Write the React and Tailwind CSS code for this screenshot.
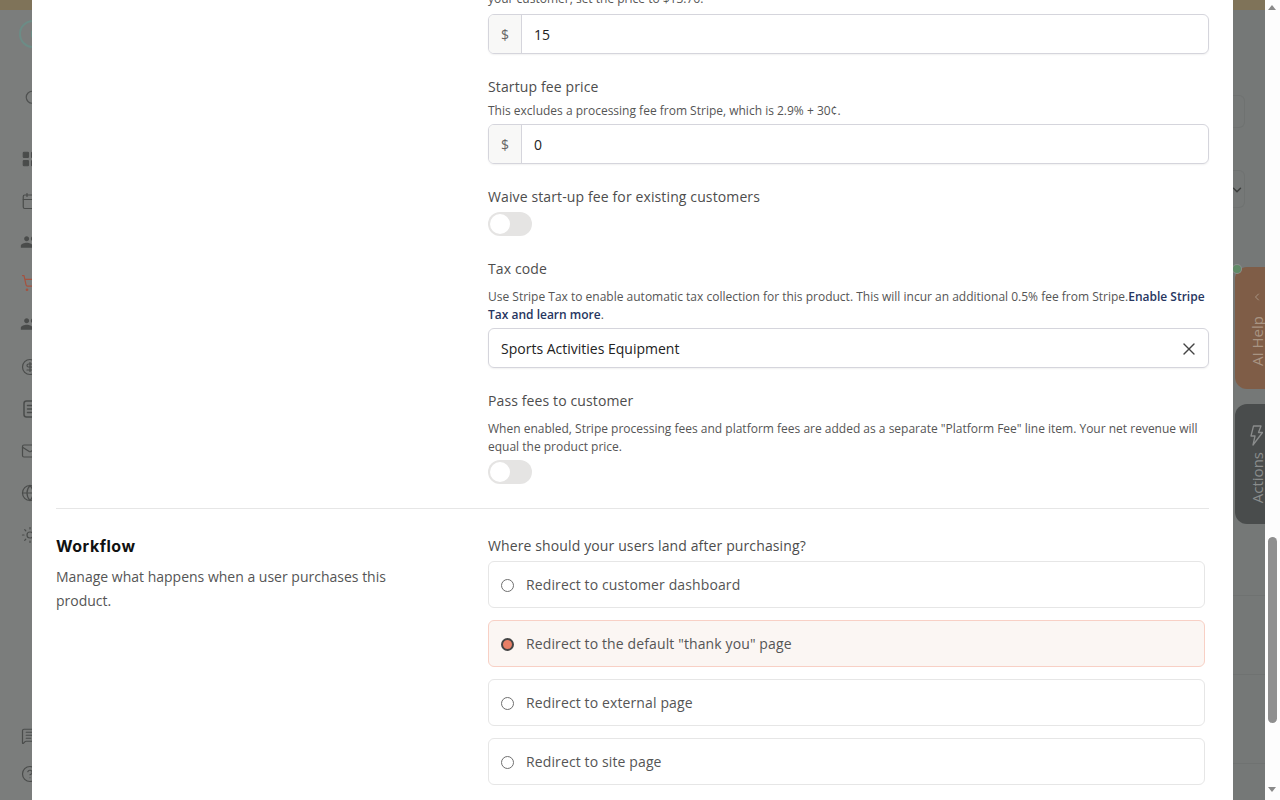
import { Calendar, ChevronDown, ChevronLeft, CircleDollarSign, CircleHelp, Globe, LayoutGrid, Mail, MessageSquareText, Search, ShoppingCart, Sun, X } from 'lucide-react';
import { MdPeople } from 'react-icons/md';

const radioOptions = [
  { id: 1, label: 'Redirect to customer dashboard' },
  { id: 2, label: 'Redirect to the default "thank you" page', checked: true },
  { id: 3, label: 'Redirect to external page' },
  { id: 4, label: 'Redirect to site page' },
];

const Toggle = ({ className }) => (
  <div className={`w-11 h-6 rounded-full bg-[#e5e4e3] p-0.5 ${className}`}>
    <div className="w-5 h-5 rounded-full bg-white" />
  </div>
);

const PriceInput = ({ value }) => (
  <div className="flex h-10 rounded-md border border-[#d5d5dc] shadow-[0_1px_2px_rgba(0,0,0,0.06)] overflow-hidden">
    <div className="w-[33px] shrink-0 bg-[#f8f8f7] border-r border-[#d5d5dc] flex items-center justify-center pt-px text-sm text-[#666]">$</div>
    <div className="flex-1 flex items-center pl-3 pt-px text-sm text-[#222]">{value}</div>
  </div>
);

const LeftStrip = () => (
  <div className="w-8 shrink-0 bg-[#7b7d7c] overflow-hidden">
    <div className="h-2.5 bg-[#7f7359]" />
    <div className="w-[28px] h-[28px] rounded-full border-2 border-[#6c8c86] ml-[19px] mt-[10px] flex items-center justify-center">
      <div className="w-1 h-2 rounded-full bg-[#6c8c86]" />
    </div>
    <Search size={18} strokeWidth={1.6} className="text-[#4f5150] ml-6 mt-[41px] shrink-0" />
    <div className="w-12 ml-[21px] mt-[43px] flex flex-col text-[#4a4c4b]">
      <LayoutGrid size={18} fill="currentColor" strokeWidth={1.5} />
      <Calendar size={18} strokeWidth={1.6} className="mt-6" />
      <MdPeople size={20} className="mt-[22px] -ml-[1px]" />
      <ShoppingCart size={18} strokeWidth={1.6} className="mt-[22px] text-[#a5523f]" />
      <MdPeople size={20} className="mt-[22px] -ml-[1px]" />
      <CircleDollarSign size={18} strokeWidth={1.6} className="mt-[24px]" />
      <svg width="18" height="18" viewBox="0 0 18 18" fill="none" stroke="currentColor" strokeWidth="1.5" strokeLinecap="round" className="mt-6 ml-[2px]">
        <rect x="1" y="1" width="16" height="16" rx="2.5" />
        <path d="M4.5 5.5h6M4.5 9h6M4.5 12.5h4" />
      </svg>
      <Mail size={18} strokeWidth={1.6} className="mt-6" />
      <Globe size={18} strokeWidth={1.6} className="mt-6" />
      <Sun size={18} strokeWidth={1.6} className="mt-6" />
      <MessageSquareText size={18} strokeWidth={1.6} className="mt-[183px]" />
      <CircleHelp size={18} strokeWidth={1.6} className="mt-5" />
    </div>
  </div>
);

const RightStrip = () => (
  <div className="w-8 shrink-0 bg-[#757877] overflow-hidden relative">
    <div className="h-2.5 bg-[#7f7359]" />
    <div className="h-[33px] w-3 mt-[85px] border-y border-r border-[#6f7271] rounded-r-md" />
    <div className="h-[38px] w-3 mt-[42px] border-y border-r border-[#6f7271] rounded-r-md flex items-center pt-0.5">
      <ChevronDown size={14} strokeWidth={2.5} className="text-[#3c3e3d] -ml-[3px] shrink-0" />
    </div>
    <div className="absolute left-[2px] top-[267px] w-[40px] h-[122px] rounded-l-xl bg-[#7f5d47] flex flex-col items-center pt-6 text-[#a89483]">
      <ChevronLeft size={12} strokeWidth={2} className="ml-[3px]" />
      <span className="[writing-mode:vertical-rl] rotate-180 text-[15px] leading-5 ml-[3px] mt-[13px]">AI Help</span>
    </div>
    <div className="absolute left-0 top-[265px] w-2 h-2 rounded-full bg-[#5f8a66] ring-1 ring-[#8c8f8e]" />
    <div className="absolute left-[2px] top-[404px] w-[40px] h-[120px] rounded-l-xl bg-[#494c4c] flex flex-col items-center pt-[21px] text-[#8a8c8c]">
      <svg width="13" height="21" viewBox="0 0 13 21" fill="none" stroke="currentColor" strokeWidth="1.3" strokeLinejoin="round" className="ml-[3px]">
        <path d="M3.5 1H11L8.5 7.5H12.5L3 20L5 11H1Z" />
      </svg>
      <span className="[writing-mode:vertical-rl] rotate-180 text-[15px] leading-5 ml-[3px] mt-[6px]">Actions</span>
    </div>
    <div className="border-t border-[#6f7271] mt-[387px]" />
    <div className="border-t border-[#6f7271] mt-[78px]" />
    <div className="border-t border-[#6f7271] mt-[88px]" />
  </div>
);

const Scrollbar = () => (
  <div className="w-[15px] shrink-0 bg-[#fdfdfd] relative">
    <div className="absolute top-[5px] left-[3px] w-0 h-0 border-x-[4.5px] border-x-transparent border-b-[5px] border-b-[#8a8a8a]" />
    <div className="absolute top-[537px] left-[3px] w-[9px] h-[186px] rounded-full bg-[#8f8f8f]" />
    <div className="absolute top-[787px] left-[3px] w-0 h-0 border-x-[4.5px] border-x-transparent border-t-[5px] border-t-[#8a8a8a]" />
  </div>
);

const App = () => {
  return (
    <div className="h-screen flex overflow-hidden font-['Open_Sans',sans-serif]">
      <LeftStrip />

      <div className="flex-1 bg-white px-6 overflow-hidden">
        <div className="ml-[432px] -mt-[10px]">
          <p className="text-xs leading-[18px] text-[#555] mb-1.5">your customer, set the price to $13.76.</p>
          <PriceInput value="15" />

          <p className="text-sm leading-5 tracking-[0.12px] text-[#4d4d4d] mt-[23px]">Startup fee price</p>
          <p className="text-xs leading-[18px] text-[#555] mt-[5px] mb-1">This excludes a processing fee from Stripe, which is 2.9% + 30¢.</p>
          <PriceInput value="0" />

          <p className="text-sm leading-5 tracking-[0.12px] text-[#4d4d4d] mt-[23px]">Waive start-up fee for existing customers</p>
          <Toggle className="mt-[5px]" />

          <p className="text-sm leading-5 tracking-[0.12px] text-[#4d4d4d] mt-[23px]">Tax code</p>
          <p className="text-xs leading-[18px] text-[#555] mt-[9px] mb-1">
            Use Stripe Tax to enable automatic tax collection for this product. This will incur an additional 0.5% fee from Stripe.
            <span className="font-semibold text-[#27365f]">Enable Stripe Tax and learn more</span>.
          </p>
          <div className="h-10 rounded-md border border-[#d5d5dc] shadow-[0_1px_2px_rgba(0,0,0,0.06)] flex items-center justify-between pl-3 pr-[9px] pt-px text-sm text-[#222]">
            Sports Activities Equipment
            <X size={20} strokeWidth={1.6} className="text-[#444]" />
          </div>

          <p className="text-sm leading-5 tracking-[0.12px] text-[#4d4d4d] mt-[23px]">Pass fees to customer</p>
          <p className="text-xs leading-[18px] text-[#555] mt-[9px]">
            When enabled, Stripe processing fees and platform fees are added as a separate "Platform Fee" line item. Your net revenue will equal the product price.
          </p>
          <Toggle className="mt-1" />
        </div>

        <div className="border-t border-[#e6e6e6] mt-6 pt-[27px] flex">
          <div className="w-[432px] shrink-0">
            <h2 className="text-base leading-5 font-bold tracking-[0.5px] text-[#111] font-['Inter',sans-serif]">Workflow</h2>
            <p className="text-sm leading-6 text-[#555] mt-[9px] w-[340px]">Manage what happens when a user purchases this product.</p>
          </div>
          <div className="flex-1 pr-1">
            <p className="text-sm leading-5 tracking-[0.12px] text-[#4d4d4d]">Where should your users land after purchasing?</p>
            <div className="flex flex-col gap-3 mt-[5px]">
              {radioOptions.map(option => (
                <label key={option.id} className={`h-[47px] rounded-md border flex items-center pl-3 text-sm tracking-[0.12px] ${option.checked ? 'border-[#f8d0c5] bg-[#fbf6f3]' : 'border-[#e6e6e6] bg-white'}`}>
                  <input
                    type="radio"
                    name="landing"
                    defaultChecked={option.checked}
                    className="appearance-none w-[13px] h-[13px] mr-3 mt-[2px] rounded-full border border-[#6f6f6f] bg-white checked:border-2 checked:border-[#444] checked:bg-[#e87f66]"
                  />
                  <span className="text-[#555]">{option.label}</span>
                </label>
              ))}
            </div>
          </div>
        </div>
      </div>

      <RightStrip />
      <Scrollbar />
    </div>
  );
};

export default App;
